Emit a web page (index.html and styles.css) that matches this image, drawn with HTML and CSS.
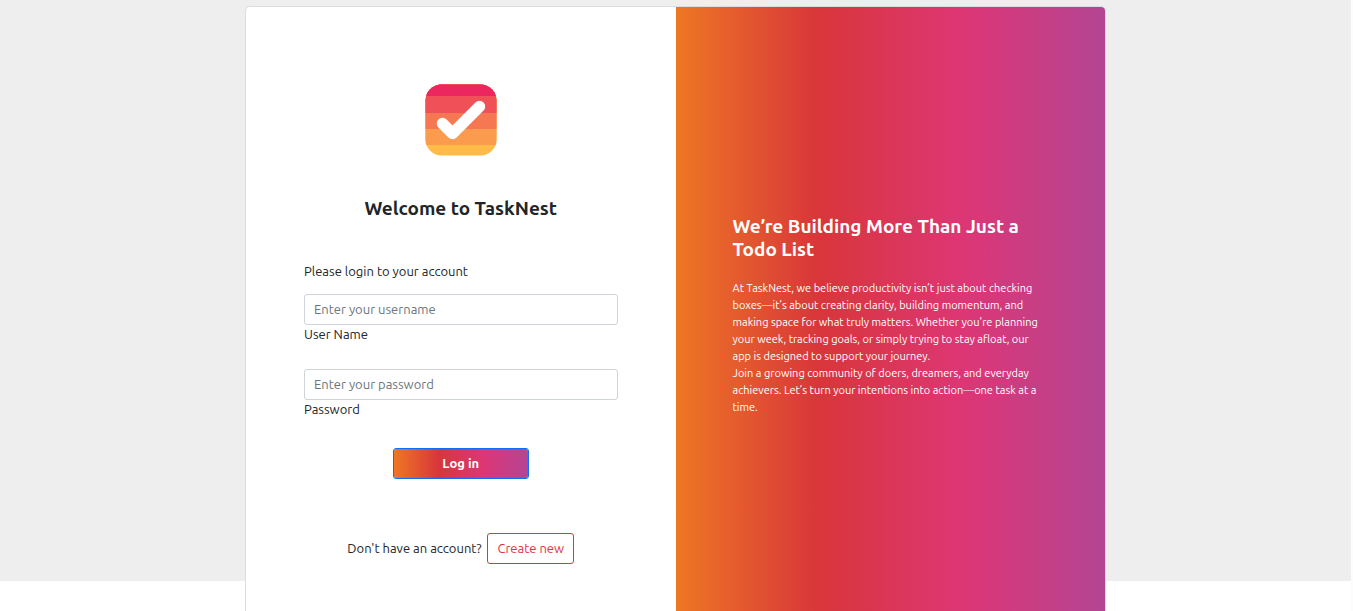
FILE: index.html
```
<!DOCTYPE html>
<html lang="en">
<head>
<meta charset="utf-8">
<meta name="viewport" content="width=device-width, initial-scale=1">
<title>TaskNest</title>
<link rel="stylesheet" href="styles.css">
</head>
<body>
<main class="page">
  <div class="card">
    <section class="login">
      <header class="brand">
        <svg class="logo" viewBox="0 0 72 72" role="img" aria-label="TaskNest logo">
          <defs><clipPath id="tile"><rect x="0.500" y="0.500" width="71" height="71" rx="16"/></clipPath></defs>
          <g clip-path="url(#tile)">
            <rect width="72" height="72" fill="#ffbb48"/>
            <rect width="72" height="61" fill="#fb9b4e"/>
            <rect width="72" height="45" fill="#f67853"/>
            <rect width="72" height="29" fill="#f05158"/>
            <rect width="72" height="12" fill="#ec265f"/>
          </g>
          <path d="M17.500 39.500L27.500 49.500L54.500 22.500" fill="none" stroke="#fff" stroke-width="11.500" stroke-linecap="round" stroke-linejoin="round"/>
        </svg>
        <h1 class="title">Welcome to TaskNest</h1>
      </header>
      <form class="form">
        <p class="intro">Please login to your account</p>
        <div class="field">
          <input class="input" id="username" type="text" placeholder="Enter your username">
          <label class="label" for="username">User Name</label>
        </div>
        <div class="field">
          <input class="input" id="password" type="password" placeholder="Enter your password">
          <label class="label" for="password">Password</label>
        </div>
        <button class="btn btn-login" type="submit">Log in</button>
        <div class="signup">
          <p class="signup-text">Don't have an account?</p>
          <button class="btn btn-create" type="button">Create new</button>
        </div>
      </form>
    </section>
    <section class="about">
      <h2 class="about-title">We’re Building More Than Just a Todo List</h2>
      <p class="about-text">At TaskNest, we believe productivity isn’t just about checking boxes—it’s about creating clarity, building momentum, and making space for what truly matters. Whether you're planning your week, tracking goals, or simply trying to stay afloat, our app is designed to support your journey.<br>Join a growing community of doers, dreamers, and everyday achievers. Let’s turn your intentions into action—one task at a time.</p>
    </section>
  </div>
</main>
</body>
</html>
```
FILE: styles.css
```
:root {
  --brand: linear-gradient(to right, #ee7724, #d8363a, #dd3675, #b44593);
}

* {
  box-sizing: border-box;
}

html {
  background: #fcfcfc;
}

body {
  height: 100vh;
  margin: 0 2px 0 0;
  overflow: hidden;
  background: #fff;
  color: #212529;
  font-family: Ubuntu, "Noto Sans", sans-serif;
  font-size: 13px;
  line-height: 19px;
}

h1, h2, p {
  margin: 0;
}

.page {
  height: calc(100vh - 30px);
  padding: 6px 12px;
  background: #eee;
}

.card {
  display: grid;
  grid-template-columns: 1fr 1fr;
  max-width: 861px;
  margin: 0 auto;
  overflow: hidden;
  background: #fff;
  border: 1px solid #dcdcdc;
  border-radius: 5px;
}

.login {
  padding: 77px 58px 60px;
}

.brand {
  display: flex;
  flex-direction: column;
  align-items: center;
  gap: 41px;
}

.logo {
  width: 72px;
  height: 72px;
}

.title, .about-title {
  font-size: 19px;
  font-weight: 600;
  line-height: 23px;
}

.form {
  display: flex;
  flex-direction: column;
  margin-top: 42px;
}

.intro {
  margin-bottom: 13px;
}

.field {
  display: flex;
  flex-direction: column;
  margin-bottom: 25px;
}

.input {
  width: 100%;
  height: 31px;
  padding: 4px 9px 6px;
  background: #fff;
  border: 1px solid #ced4da;
  border-radius: 3px;
  color: inherit;
  font: inherit;
}

.input::placeholder {
  color: #6c757d;
  opacity: 1;
}

.label {
  align-self: flex-start;
}

.btn {
  height: 31px;
  padding: 4px 9px 5px;
  border: 1px solid;
  border-radius: 3px;
  font: inherit;
}

.btn-login {
  align-self: center;
  width: 136px;
  margin-top: 4px;
  background: var(--brand) padding-box;
  border-color: #0d6efd;
  color: #fff;
  font-weight: 700;
}

.signup {
  display: flex;
  align-items: center;
  justify-content: center;
  gap: 6px;
  margin-top: 54px;
}

.btn-create {
  background: #fff;
  border-color: #dc3545;
  color: #dc3545;
}

.about {
  display: flex;
  flex-direction: column;
  justify-content: center;
  gap: 19px;
  padding: 48px 57px;
  background: var(--brand);
  color: #fff;
}

.about-text {
  font-size: 11px;
  line-height: 17px;
}
```
